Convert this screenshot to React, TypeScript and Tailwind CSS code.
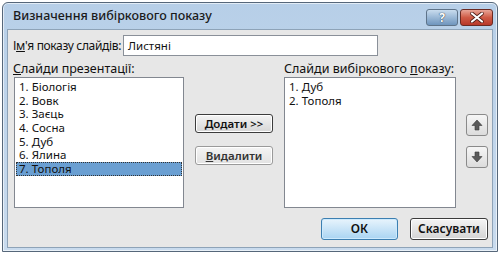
import React from "react";

const font = { fontFamily: '"Noto Sans", "Open Sans", sans-serif' };

function ArrowIcon({ down }: { down?: boolean }) {
  return (
    <svg width="12" height="12" viewBox="0 0 12 12" style={{ transform: down ? "rotate(180deg)" : undefined }}>
      <path d="M6 1 L11 6.5 L8 6.5 L8 11 L4 11 L4 6.5 L1 6.5 Z" fill="#5a5a5a" stroke="#3a3a3a" strokeWidth="0.6" strokeLinejoin="round" />
    </svg>
  );
}

export default function App() {
  const left = ["1. Біологія", "2. Вовк", "3. Заєць", "4. Сосна", "5. Дуб", "6. Ялина", "7. Тополя"];
  const right = ["1. Дуб", "2. Тополя"];
  return (
    <div className="w-[500px] h-[255px] bg-white relative overflow-hidden" style={font}>
      <div className="absolute left-[2px] top-[2px] w-[496px] h-[250px] rounded-t-[6px] border border-[#56677a] bg-gradient-to-b from-[#b7cfe8] to-[#c9dbee] flex flex-col shadow-[inset_0_0_0_1px_rgba(255,255,255,0.6)]">
        <div className="h-[26px] flex items-center pl-[10px] pr-[4px] shrink-0">
          <span className="text-[12.5px] font-medium text-[#1b1b1b] flex-1 pt-[1px] whitespace-nowrap">Визначення вибіркового показу</span>
          <div className="flex gap-[2px] mt-[3px]">
            <div className="w-[32px] h-[17px] rounded-[3px] border border-[#5e7389] bg-gradient-to-b from-[#c9dcee] via-[#9ab8d6] to-[#6f95bd] flex items-center justify-center">
              <span className="text-[12px] font-bold text-white leading-none" style={{ textShadow: "0 0 1px #2d3e50, 0 0 1px #2d3e50" }}>?</span>
            </div>
            <div className="w-[33px] h-[17px] rounded-[3px] border border-[#6b2a22] bg-gradient-to-b from-[#e7a497] via-[#cf5a45] to-[#b7382a] flex items-center justify-center">
              <svg width="14" height="11" viewBox="0 0 14 11">
                <path d="M2 1.5 L12 9.5 M12 1.5 L2 9.5" stroke="#4a1a14" strokeWidth="3.6" strokeLinecap="round" />
                <path d="M2 1.5 L12 9.5 M12 1.5 L2 9.5" stroke="#ffffff" strokeWidth="2.2" strokeLinecap="round" />
              </svg>
            </div>
          </div>
        </div>
        <div className="mx-[4px] mb-[3px] flex-1 border border-[#8ea3b8] bg-[#e7e7e7] flex flex-col pl-[4px] pt-[5px] text-[12.5px] text-[#111]">
          <div className="flex items-center h-[21px]">
            <span className="w-[111px] pl-[1px] whitespace-nowrap text-[12px] tracking-[-0.35px]">І<span className="underline">м</span>'я показу слайдів:</span>
            <div className="w-[255px] h-[21px] border border-[#8a9099] bg-white flex items-center pl-[4px] text-[11.5px]">Листяні</div>
          </div>
          <div className="flex mt-[4px]">
            <div className="flex flex-col w-[171px]">
              <span className="pl-[1px] leading-[17px] whitespace-nowrap"><span className="underline">С</span>лайди презентації:</span>
              <div className="ml-[2px] w-[170px] h-[131px] border border-[#828790] bg-white pt-[2px] px-[1px] text-[11.5px]">
                {left.map((t, i) => (
                  <div
                    key={t}
                    className={
                      "h-[13.7px] leading-[13.7px] pl-[3px] " +
                      (i === 6 ? "bg-[#6a9fd2] outline outline-1 outline-dotted outline-[#333] -outline-offset-1" : "")
                    }
                  >
                    {t}
                  </div>
                ))}
              </div>
            </div>
            <div className="flex flex-col ml-[12px] pt-[54px] gap-[13px]">
              <div className="w-[78px] h-[19px] rounded-[3px] border border-[#3c3c3c] bg-gradient-to-b from-[#f4f4f4] to-[#d6d6d6] flex items-center justify-center text-[11.5px] font-semibold shadow-[inset_0_0_0_1px_#fff]">
                <span className="underline">Д</span>одати &gt;&gt;
              </div>
              <div className="w-[78px] h-[19px] rounded-[3px] border border-[#9a9a9a] bg-gradient-to-b from-[#f4f4f4] to-[#e2e2e2] flex items-center justify-center text-[11.5px] font-semibold text-[#333] shadow-[inset_0_0_0_1px_#fff]">
                <span className="underline">В</span>идалити
              </div>
            </div>
            <div className="flex flex-col ml-[11px] w-[172px]">
              <span className="leading-[17px] whitespace-nowrap">Слайди вибіркового <span className="underline">п</span>оказу:</span>
              <div className="w-[172px] h-[131px] border border-[#828790] bg-white pt-[2px] px-[1px] text-[11.5px]">
                {right.map((t) => (
                  <div key={t} className="h-[13.7px] leading-[13.7px] pl-[3px]">{t}</div>
                ))}
              </div>
            </div>
            <div className="flex flex-col ml-[10px] pt-[54px] gap-[10px]">
              <div className="w-[22px] h-[22px] rounded-[3px] border border-[#8a8a8a] bg-gradient-to-b from-[#f6f6f6] to-[#dcdcdc] flex items-center justify-center">
                <ArrowIcon />
              </div>
              <div className="w-[22px] h-[22px] rounded-[3px] border border-[#8a8a8a] bg-gradient-to-b from-[#f6f6f6] to-[#dcdcdc] flex items-center justify-center">
                <ArrowIcon down />
              </div>
            </div>
          </div>
          <div className="flex justify-end gap-[12px] pr-[4px] mt-[10px]">
            <div className="w-[77px] h-[22px] rounded-[3px] border border-[#3c7fb1] bg-gradient-to-b from-[#e8f4fc] to-[#a9d4f2] flex items-center justify-center text-[12px] font-semibold shadow-[inset_0_0_0_1px_#cdeafd]">
              ОК
            </div>
            <div className="w-[78px] h-[22px] rounded-[3px] border border-[#3c3c3c] bg-gradient-to-b from-[#f4f4f4] to-[#d4d4d4] flex items-center justify-center text-[12px] font-semibold shadow-[inset_0_0_0_1px_#fff]">
              Скасувати
            </div>
          </div>
        </div>
      </div>
    </div>
  );
}
